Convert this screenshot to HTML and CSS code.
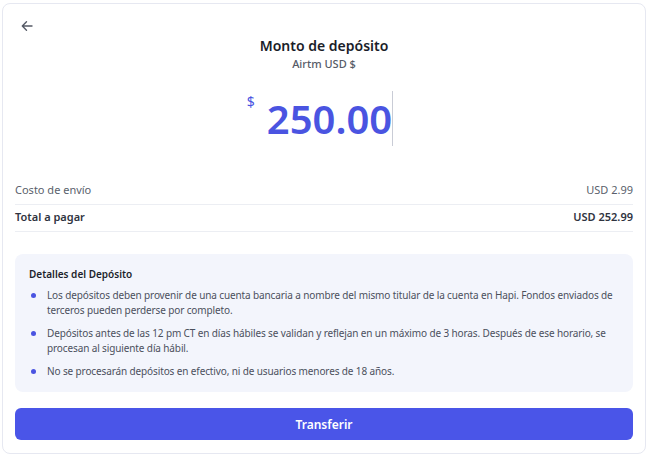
FILE: index.html
```html
<!DOCTYPE html>
<html lang="es">
<head>
<meta charset="utf-8">
<title>Monto de depósito</title>
<link rel="stylesheet" href="styles.css">
</head>
<body>
<main class="card">
  <header class="header">
    <button class="back" aria-label="Volver">
      <svg width="12" height="12" viewBox="0 0 12 12" fill="none" stroke="#555a66" stroke-width="1.4" stroke-linecap="round" stroke-linejoin="round"><path d="M11 6H1.5M5.5 1.8L1.3 6l4.2 4.2"/></svg>
    </button>
    <h1 class="title">Monto de depósito</h1>
    <p class="subtitle">Airtm USD $</p>
  </header>

  <div class="amount">
    <span class="currency">$</span>
    <span class="value">250.00</span>
    <span class="caret"></span>
  </div>

  <div class="rows">
    <div class="row">
      <span>Costo de envío</span>
      <span>USD 2.99</span>
    </div>
    <div class="row row-total">
      <span>Total a pagar</span>
      <span>USD 252.99</span>
    </div>
  </div>

  <section class="details">
    <h2 class="details-title">Detalles del Depósito</h2>
    <ul class="details-list">
      <li>Los depósitos deben provenir de una cuenta bancaria a nombre del mismo titular de la cuenta en Hapi. Fondos enviados de terceros pueden perderse por completo.</li>
      <li>Depósitos antes de las 12 pm CT en días hábiles se validan y reflejan en un máximo de 3 horas. Después de ese horario, se procesan al siguiente día hábil.</li>
      <li>No se procesarán depósitos en efectivo, ni de usuarios menores de 18 años.</li>
    </ul>
  </section>

  <button class="submit">Transferir</button>
</main>
</body>
</html>
```

FILE: styles.css
```css
* { box-sizing: border-box; }
html, body { margin: 0; padding: 0; background: #ffffff; }
body {
  font-family: "Noto Sans", "Open Sans", sans-serif;
  color: #1c1f2b;
  padding: 3px 4px 2px 2px;
}
.card {
  border: 1px solid #e6e8f1;
  border-radius: 8px;
  padding: 0 12px 12px 12px;
  display: flex;
  flex-direction: column;
  height: 451px;
}
.header {
  display: flex;
  flex-direction: column;
  align-items: center;
  padding-top: 14px;
}
.back {
  align-self: flex-start;
  width: 16px;
  height: 16px;
  margin-left: 4px;
  padding: 0;
  border: 0;
  background: none;
  display: flex;
  align-items: center;
  justify-content: center;
}
.title {
  margin: 2px 0 0;
  font-size: 14px;
  line-height: 20px;
  font-weight: 600;
  color: #1a1d29;
}
.subtitle {
  margin: 0;
  font-size: 11px;
  line-height: 16px;
  font-weight: 500;
  color: #555a66;
}
.amount {
  display: flex;
  justify-content: center;
  align-items: flex-start;
  margin-top: 19px;
  height: 55px;
  padding-right: 8px;
  color: #4a54e1;
}
.currency {
  font-size: 14px;
  line-height: 14px;
  margin-top: 4px;
  margin-right: 12px;
}
.value {
  font-size: 40px;
  line-height: 55px;
  font-weight: 600;
}
.caret {
  width: 1px;
  height: 55px;
  background: #c9ccd6;
}
.rows {
  margin-top: 32px;
}
.row {
  display: flex;
  justify-content: space-between;
  padding: 4px 0 6px;
  font-size: 11px;
  line-height: 16px;
  color: #5a5f6c;
  border-bottom: 1px solid #eceef3;
}
.row-total {
  font-weight: 600;
  color: #2f3340;
}
.details {
  margin-top: 22px;
  background: #f3f5fc;
  border-radius: 8px;
  padding: 12px 12px 13px 14px;
}
.details-title {
  margin: 0;
  font-size: 10px;
  line-height: 16px;
  font-weight: 600;
  color: #1c1f2b;
}
.details-list {
  list-style: none;
  margin: 6px 0 0;
  padding: 0;
}
.details-list li {
  position: relative;
  padding-left: 18px;
  font-size: 10px;
  line-height: 15px;
  letter-spacing: -0.12px;
  color: #4b505c;
}
.details-list li + li { margin-top: 8px; }
.details-list li::before {
  content: "";
  position: absolute;
  left: 2px;
  top: 5px;
  width: 5px;
  height: 5px;
  border-radius: 50%;
  background: #4a54e1;
}
.submit {
  margin-top: 16px;
  height: 32px;
  border: 0;
  border-radius: 6px;
  background: #4a55e8;
  color: #ffffff;
  font-family: inherit;
  font-size: 12px;
  font-weight: 600;
}
```
